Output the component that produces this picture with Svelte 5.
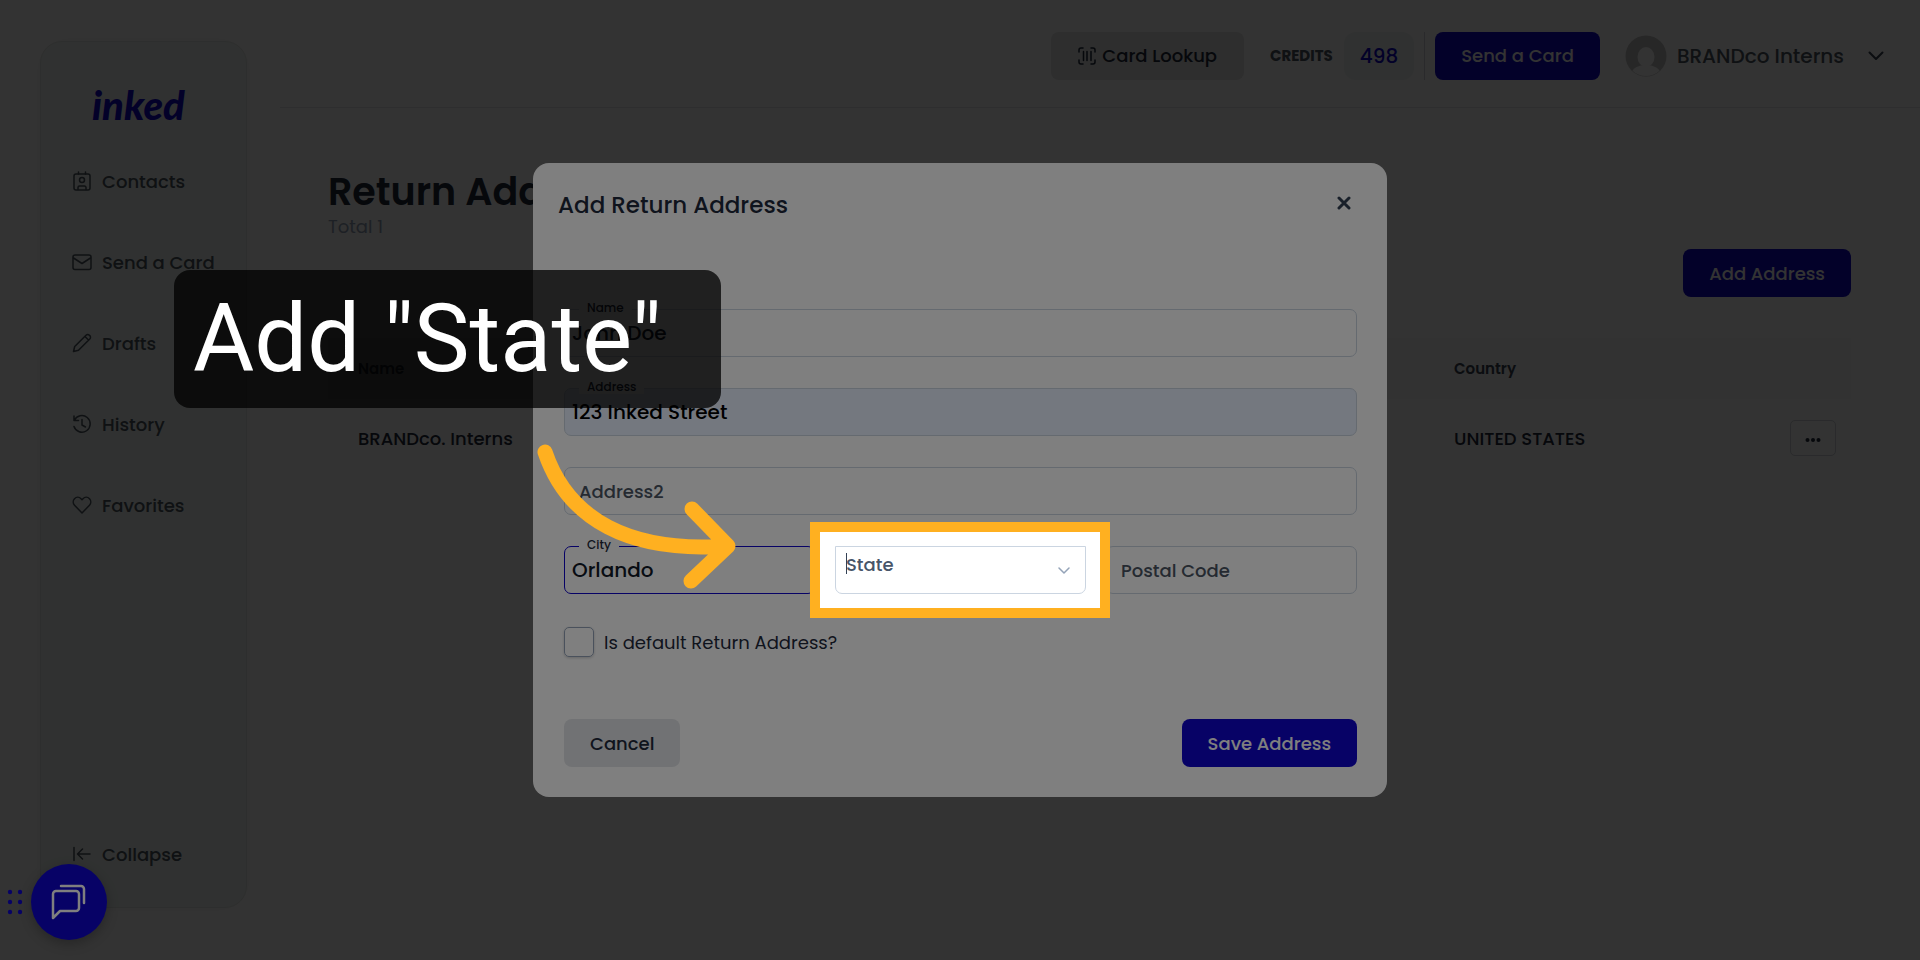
<script lang="ts">
	type NavItem = { label: string; icon: string };

	const nav: NavItem[] = [
		{ label: 'Contacts', icon: 'contacts' },
		{ label: 'Send a Card', icon: 'mail' },
		{ label: 'Drafts', icon: 'pencil' },
		{ label: 'History', icon: 'history' },
		{ label: 'Favorites', icon: 'heart' }
	];

	const addresses = [{ name: 'BRANDco. Interns', country: 'UNITED STATES' }];

	let form = $state({
		name: 'John Doe',
		address: '123 Inked Street',
		address2: '',
		city: 'Orlando',
		state: '',
		postal: '',
		isDefault: false
	});
</script>

{#snippet icon(name: string)}
	<svg class="icon" viewBox="0 0 20 20" aria-hidden="true">
		{#if name === 'contacts'}
			<rect x="2" y="3" width="16" height="16" rx="2" />
			<path d="M6.5 1v2M13.5 1v2M6 18.500v-2a1.500 1.500 0 0 1 1.500-1.500h5a1.500 1.500 0 0 1 1.500 1.500v2" />
			<circle cx="10" cy="9" r="2.500" />
		{:else if name === 'mail'}
			<rect x="1" y="3" width="18" height="14.500" rx="2" />
			<path d="M1.500 6l8.500 5.500L18.500 6" />
		{:else if name === 'pencil'}
			<path d="M1.500 18.500l1.200-5L14 2.200a2.400 2.400 0 0 1 3.400 0l.4.400a2.400 2.400 0 0 1 0 3.400L6.500 17.300zM13 3.500l3.500 3.500" />
		{:else if name === 'history'}
			<path d="M2 2v4.500h4.500M2.300 6.500A8.300 8.300 0 1 1 2 12.500M10 5.500V11l3.500 2" />
		{:else if name === 'heart'}
			<path d="M10 18l-7.500-7.800a4.800 4.800 0 0 1 0-6.500 4.600 4.600 0 0 1 6.500 0l1 1 1-1a4.600 4.600 0 0 1 6.500 0 4.800 4.800 0 0 1 0 6.500z" />
		{:else if name === 'collapse'}
			<path d="M2 3.500v13M18 10H6M10.500 5L5.500 10l5 5" />
		{/if}
	</svg>
{/snippet}

<div class="app">
	<aside class="sidebar">
		<a class="logo" href="/">inked</a>
		<nav>
			{#each nav as item}
				<a class="nav-item" href="/">
					{@render icon(item.icon)}
					{item.label}
				</a>
			{/each}
		</nav>
		<button class="nav-item collapse">
			{@render icon('collapse')}
			Collapse
		</button>
	</aside>

	<div class="content">
		<header>
			<button class="btn lookup">
				<svg width="18" height="18" viewBox="0 0 18 18" aria-hidden="true">
					<path d="M1 5V3a2 2 0 0 1 2-2h2M13 1h2a2 2 0 0 1 2 2v2M17 13v2a2 2 0 0 1-2 2h-2M5 17H3a2 2 0 0 1-2-2v-2M5.500 4.500v9M9 4.500v9M13 4.500v9" />
				</svg>
				Card Lookup
			</button>
			<span class="credits-label">CREDITS</span>
			<span class="credits">498</span>
			<span class="divider"></span>
			<button class="btn primary">Send a Card</button>
			<button class="account">
				<svg class="avatar" viewBox="0 0 42 42" aria-hidden="true">
					<defs><clipPath id="avatar-clip"><circle cx="21" cy="21" r="20" /></clipPath></defs>
					<circle cx="21" cy="21" r="20.500" fill="#c4c4c4" />
					<g clip-path="url(#avatar-clip)" fill="#fff">
						<ellipse cx="21" cy="22" rx="8.500" ry="10" />
						<ellipse cx="21" cy="38" rx="14" ry="8" />
					</g>
				</svg>
				BRANDco Interns
				<svg class="caret" width="16" height="10" viewBox="0 0 16 10" aria-hidden="true">
					<path d="M1.500 1.500L8 8l6.500-6.500" />
				</svg>
			</button>
		</header>

		<main>
			<h1>Return Address</h1>
			<p class="total">Total 1</p>
			<div class="toolbar">
				<button class="btn primary">Add Address</button>
			</div>
			<table>
				<thead>
					<tr>
						<th class="col-name">Name</th>
						<th>Country</th>
						<th class="col-actions"></th>
					</tr>
				</thead>
				<tbody>
					{#each addresses as row}
						<tr>
							<td>{row.name}</td>
							<td>{row.country}</td>
							<td class="col-actions">
								<button class="more" aria-label="Row actions">
									<svg width="16" height="4" viewBox="0 0 16 4" aria-hidden="true">
										<circle cx="2.500" cy="2" r="2" /><circle cx="8" cy="2" r="2" /><circle cx="13.500" cy="2" r="2" />
									</svg>
								</button>
							</td>
						</tr>
					{/each}
				</tbody>
			</table>
		</main>
	</div>
</div>

<div class="backdrop"></div>

<div class="modal-layer">
	<div class="modal" role="dialog" aria-labelledby="modal-title">
		<div class="modal-head">
			<h2 id="modal-title">Add Return Address</h2>
			<button class="close" aria-label="Close">
				<svg width="14" height="14" viewBox="0 0 14 14" aria-hidden="true">
					<path d="M2 2l10 10M12 2L2 12" />
				</svg>
			</button>
		</div>

		<form onsubmit={(e) => e.preventDefault()}>
			<div class="field">
				<input id="name" type="text" bind:value={form.name} />
				<label for="name">Name</label>
			</div>
			<div class="field">
				<input id="address" class="autofilled" type="text" bind:value={form.address} />
				<label for="address">Address</label>
			</div>
			<div class="field">
				<input type="text" placeholder="Address2" aria-label="Address2" bind:value={form.address2} />
			</div>
			<div class="row">
				<div class="field">
					<input id="city" class="active" type="text" bind:value={form.city} />
					<label for="city">City</label>
				</div>
				<div class="field">
					<select aria-label="State" bind:value={form.state}>
						<option value="">State</option>
					</select>
					<span class="text-cursor"></span>
					<svg class="chevron" width="12" height="8" viewBox="0 0 12 8" aria-hidden="true">
						<path d="M1 1l5 5 5-5" />
					</svg>
					<div class="spotlight"></div>
					<svg class="arrow" width="200" height="146" viewBox="0 0 200 146" aria-hidden="true">
						<path d="M8 8C31 76 93 109 190 102M155 65l36 37-37 35" />
					</svg>
					<div class="callout">Add "State"</div>
				</div>
				<div class="field">
					<input type="text" placeholder="Postal Code" aria-label="Postal Code" bind:value={form.postal} />
				</div>
			</div>
			<label class="check">
				<input type="checkbox" bind:checked={form.isDefault} />
				Is default Return Address?
			</label>
			<div class="actions">
				<button class="btn cancel" type="button">Cancel</button>
				<button class="btn primary" type="submit">Save Address</button>
			</div>
		</form>
	</div>
</div>

<div class="chat">
	<svg width="16" height="26" viewBox="0 0 16 26" aria-hidden="true">
		{#each [3, 13, 23] as y}
			<circle cx="3" cy={y} r="2.200" />
			<circle cx="13" cy={y} r="2.200" />
		{/each}
	</svg>
	<button class="chat-btn" aria-label="Open chat">
		<svg width="36" height="36" viewBox="0 0 36 36" aria-hidden="true">
			<path d="M2 34V10a3 3 0 0 1 3-3h20a3 3 0 0 1 3 3v14a3 3 0 0 1-3 3H9zM10 2h20a3 3 0 0 1 3 3v14" />
		</svg>
	</button>
</div>

<style>
	:global(body) {
		margin: 0;
		background: #fff;
		font-family: Poppins, Inter, sans-serif;
		font-size: 18px;
		color: #1e293b;
	}

	button,
	input,
	select {
		font: inherit;
		color: inherit;
		box-sizing: border-box;
		margin: 0;
	}

	button {
		border: none;
		background: none;
		padding: 0;
		cursor: pointer;
	}

	svg {
		flex: none;
		fill: none;
		stroke-linecap: round;
		stroke-linejoin: round;
	}

	.app {
		display: flex;
		gap: 33px;
		box-sizing: border-box;
		min-height: 100vh;
		padding-left: 40px;
	}

	.sidebar {
		display: flex;
		flex-direction: column;
		flex: none;
		box-sizing: border-box;
		width: 207px;
		margin: 41px 0 52px;
		padding: 39px 0 29px 31px;
		border: 1px solid #e4e8e6;
		border-radius: 22px;
		background: #f0f7f4;
		box-shadow: 0 0 24px rgba(0, 0, 0, 0.02);
	}

	.logo {
		align-self: flex-start;
		margin-left: 20px;
		font-family: Lato, sans-serif;
		font-size: 40px;
		font-weight: 900;
		font-style: italic;
		line-height: 48px;
		color: #0f05cc;
		text-decoration: none;
	}

	nav {
		display: flex;
		flex-direction: column;
		gap: 33px;
		margin-top: 28px;
	}

	.nav-item {
		display: flex;
		align-items: center;
		gap: 10px;
		height: 48px;
		font-weight: 500;
		color: #4b5560;
		text-decoration: none;
	}

	.collapse {
		margin-top: auto;
	}

	.icon {
		width: 20px;
		height: 20px;
		stroke: #4b5560;
		stroke-width: 1.500;
	}

	.content {
		flex: 1;
		min-width: 0;
	}

	header {
		display: flex;
		align-items: center;
		justify-content: flex-end;
		box-sizing: border-box;
		height: 108px;
		padding: 4px 36px 0 0;
		border-bottom: 1px solid #e5e7eb;
	}

	.btn {
		height: 48px;
		padding: 0 26px;
		border-radius: 8px;
		font-weight: 500;
	}

	.primary {
		background: #0f05cc;
		color: #fff;
	}

	.lookup {
		display: flex;
		align-items: center;
		gap: 6px;
		padding: 0 27px;
		background: #e5e5e5;
	}

	.lookup svg {
		stroke: #1e293b;
		stroke-width: 1.500;
	}

	.credits-label {
		margin-left: 26px;
		font-size: 15px;
		font-weight: 700;
		color: #4b5560;
	}

	.credits {
		margin-left: 11px;
		padding: 0 16px;
		border-radius: 12px;
		background: #f0f7f4;
		font-size: 20px;
		font-weight: 500;
		line-height: 48px;
		color: #0f05cc;
	}

	.divider {
		width: 1px;
		height: 48px;
		margin: 0 10px;
		background: #d1d5db;
	}

	.account {
		display: flex;
		align-items: center;
		gap: 10px;
		margin-left: 25px;
		font-size: 20px;
		font-weight: 500;
		color: #4b5563;
	}

	.avatar {
		width: 42px;
		height: 42px;
	}

	.caret {
		margin-left: 14px;
		stroke: #374151;
		stroke-width: 2;
	}

	main {
		padding: 61px 69px 0 48px;
	}

	h1 {
		margin: 0;
		font-size: 38px;
		font-weight: 600;
		line-height: 46px;
	}

	.total {
		margin: 0;
		font-size: 18px;
		line-height: 24px;
		color: #94a3b8;
	}

	.toolbar {
		display: flex;
		justify-content: flex-end;
		margin-top: 10px;
	}

	table {
		width: 100%;
		margin-top: 41px;
		border-collapse: collapse;
		table-layout: fixed;
	}

	th,
	td {
		padding: 0 0 0 30px;
		text-align: left;
		font-weight: 500;
	}

	th {
		height: 61px;
		background: #fafafa;
		font-size: 15px;
		font-weight: 600;
		color: #374151;
	}

	td {
		height: 78px;
		font-size: 18px;
	}

	.col-name {
		width: 70%;
	}

	.col-actions {
		width: 120px;
		padding: 0 15px 0 0;
		text-align: right;
	}

	.more {
		width: 46px;
		height: 36px;
		border: 1px solid #d1d5db;
		border-radius: 5px;
	}

	.more svg {
		fill: #1e293b;
		vertical-align: middle;
	}

	.backdrop {
		position: fixed;
		inset: 0;
		background: rgba(0, 0, 0, 0.6);
	}

	/* no z-index on this layer, so the spotlight can sit above the chat button */
	.modal-layer {
		position: absolute;
		inset: 0;
		display: flex;
		align-items: center;
		justify-content: center;
	}

	.modal {
		box-sizing: border-box;
		width: 100%;
		max-width: 854px;
		padding: 25px 30px 30px 31px;
		border-radius: 16px;
		background: #fff;
	}

	.modal-head {
		display: flex;
		align-items: flex-start;
		justify-content: space-between;
		margin-left: -6px;
	}

	h2 {
		margin: 0;
		font-size: 23px;
		font-weight: 500;
		line-height: 34px;
	}

	.close {
		display: flex;
		padding: 8px 6px;
	}

	.close svg {
		stroke: #334155;
		stroke-width: 3;
	}

	form {
		display: flex;
		flex-direction: column;
		gap: 31px;
		margin-top: 87px;
	}

	.row {
		display: grid;
		grid-template-columns: repeat(3, 1fr);
		gap: 20px;
	}

	.field {
		position: relative;
		min-width: 0;
	}

	.field input,
	.field select {
		display: block;
		width: 100%;
		height: 48px;
		padding: 0 7px;
		border: 1px solid #cbd5e1;
		border-radius: 7px;
		outline: none;
		background: #fff;
		font-size: 20px;
		font-weight: 500;
		color: #111827;
	}

	.field input:placeholder-shown {
		padding-left: 14px;
	}

	.field input::placeholder {
		font-size: 18px;
		color: #4b5563;
		opacity: 1;
	}

	.field input.autofilled {
		background: #e8f0fe;
		color: #000;
	}

	.field input.active {
		border-color: #0f05cc;
	}

	.field label {
		position: absolute;
		top: -8px;
		left: 15px;
		padding: 0 8px;
		background: #fff;
		font-size: 12px;
		font-weight: 500;
		line-height: 14px;
	}

	.field select {
		appearance: none;
		padding: 0 40px 12px 10px;
		border-radius: 0 0 7px 7px;
		font-size: 18px;
		color: #475569;
	}

	.text-cursor {
		position: absolute;
		top: 7px;
		left: 11px;
		width: 1px;
		height: 21px;
		background: #334155;
	}

	.chevron {
		position: absolute;
		top: 21px;
		right: 16px;
		stroke: #94a3b8;
		stroke-width: 1.500;
	}

	.spotlight {
		position: absolute;
		z-index: 30;
		inset: -24px -24px -24px -25px;
		border: 10px solid #ffb020;
		box-shadow: 0 0 0 4000px rgba(0, 0, 0, 0.5);
		pointer-events: none;
	}

	.callout {
		position: absolute;
		z-index: 31;
		top: -276px;
		left: -661px;
		box-sizing: border-box;
		width: 547px;
		padding: 0 19px;
		border-radius: 16px;
		background: rgba(0, 0, 0, 0.75);
		font-family: Roboto, sans-serif;
		font-size: 94px;
		line-height: 138px;
		color: #fff;
		white-space: nowrap;
	}

	.arrow {
		position: absolute;
		z-index: 32;
		top: -102px;
		left: -298px;
		stroke: #ffb020;
		stroke-width: 15;
	}

	.check {
		display: flex;
		align-items: center;
		gap: 10px;
		margin-top: 2px;
	}

	.check input {
		appearance: none;
		width: 30px;
		height: 30px;
		border: 1px solid #94a3b8;
		border-radius: 5px;
		box-shadow: 0 1px 3px rgba(0, 0, 0, 0.2);
	}

	.actions {
		display: flex;
		justify-content: space-between;
		margin-top: 31px;
	}

	.cancel {
		background: #e2e4e8;
	}

	.chat {
		position: fixed;
		left: 7px;
		bottom: 20px;
		display: flex;
		align-items: center;
		gap: 8px;
	}

	.chat > svg {
		fill: #0f05cc;
	}

	.chat-btn {
		display: flex;
		align-items: center;
		justify-content: center;
		width: 76px;
		height: 76px;
		border-radius: 50%;
		background: #0f05cc;
		box-shadow: 0 4px 12px rgba(0, 0, 0, 0.25);
	}

	.chat-btn svg {
		stroke: #fff;
		stroke-width: 2.500;
	}
</style>
